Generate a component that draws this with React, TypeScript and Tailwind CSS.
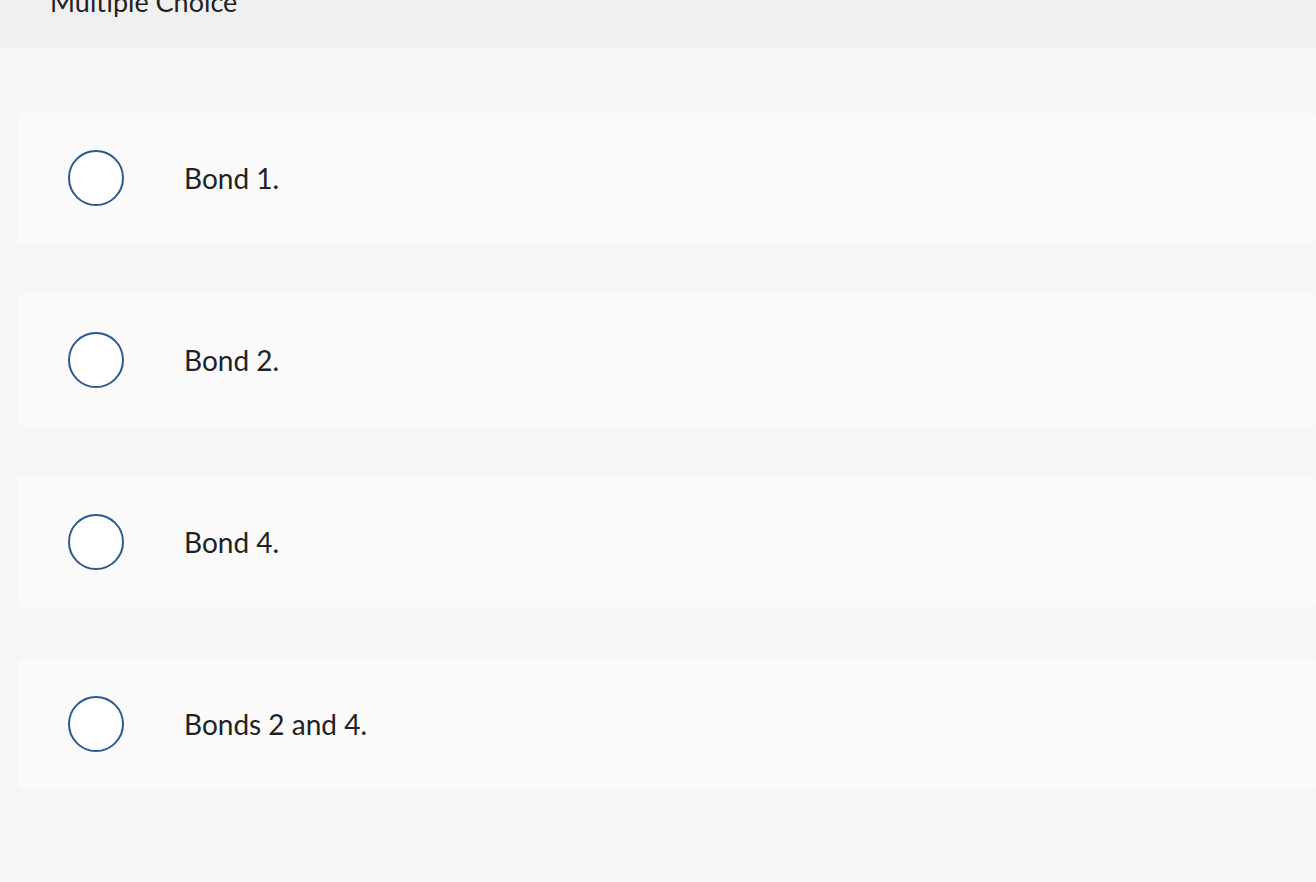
const options = ["Bond 1.", "Bond 2.", "Bond 4.", "Bonds 2 and 4."];

function Option({ label }: { label: string }) {
  return (
    <label className="flex h-[132px] items-center rounded-md bg-[#fafafa] pl-[50px] cursor-pointer">
      <span className="block h-[56px] w-[56px] shrink-0 rounded-full border-2 border-[#2c5a8c] bg-white" />
      <span className="ml-[60px] text-[28px] leading-none text-[#222222]">{label}</span>
    </label>
  );
}

export default function App() {
  return (
    <div className="min-h-[882px] bg-[#f6f6f6] font-['Lato',sans-serif]">
      {/* Header */}
      <div className="h-12 overflow-hidden bg-[#f0f0f0] pl-[50px]">
        <h2 className="-mt-[18px] text-[27px] font-normal text-[#222222]">Multiple Choice</h2>
      </div>

      {/* Choices */}
      <div className="flex flex-col gap-[50px] pl-[18px] pt-16">
        {options.map((o) => (
          <Option key={o} label={o} />
        ))}
      </div>
    </div>
  );
}
